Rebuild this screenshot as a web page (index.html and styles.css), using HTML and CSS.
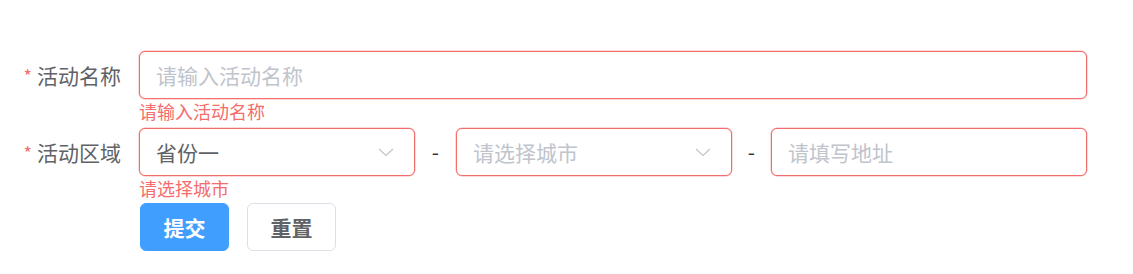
FILE: index.html
```html
<!DOCTYPE html>
<html lang="zh-CN">
<head>
<meta charset="utf-8">
<title>活动表单</title>
<link rel="stylesheet" href="styles.css">
</head>
<body>
<form class="form">
  <div class="form-item">
    <label class="label"><span class="req">*</span>活动名称</label>
    <div class="content">
      <div class="input is-error"><span class="placeholder">请输入活动名称</span></div>
      <div class="error error-first">请输入活动名称</div>
    </div>
  </div>
  <div class="form-item">
    <label class="label"><span class="req">*</span>活动区域</label>
    <div class="content">
      <div class="region">
        <div class="input is-error select"><span class="value">省份一</span>
          <svg class="arrow" width="16" height="9" viewBox="0 0 16 9"><path d="M1 1 L8 7.5 L15 1" fill="none" stroke="#C0C4CC" stroke-width="1.2"/></svg>
        </div>
        <div class="dash">-</div>
        <div class="input is-error select"><span class="placeholder">请选择城市</span>
          <svg class="arrow" width="16" height="9" viewBox="0 0 16 9"><path d="M1 1 L8 7.5 L15 1" fill="none" stroke="#C0C4CC" stroke-width="1.2"/></svg>
        </div>
        <div class="dash">-</div>
        <div class="input is-error"><span class="placeholder">请填写地址</span></div>
      </div>
      <div class="error error-last">请选择城市</div>
    </div>
  </div>
  <div class="form-item">
    <div class="label"></div>
    <div class="content buttons">
      <button type="button" class="btn btn-primary">提交</button>
      <button type="button" class="btn">重置</button>
    </div>
  </div>
</form>
</body>
</html>
```

FILE: styles.css
```css
* { box-sizing: border-box; }
html, body { margin: 0; padding: 0; background: #fff; }
body {
  font-family: "Noto Sans CJK SC", "Noto Sans", "Liberation Sans", sans-serif;
  color: #606266;
}
.form {
  padding-top: 51px;
  width: 1087px;
}
.form-item {
  display: flex;
  align-items: flex-start;
}
.label {
  width: 139px;
  flex: 0 0 139px;
  padding-right: 18px;
  text-align: right;
  font-size: 21px;
  line-height: 48px;
  height: 48px;
  color: #606266;
}
.req {
  color: #F56C6C;
  margin-right: 5px;
  font-size: 18px;
  vertical-align: 1px;
}
.content {
  flex: 1;
  min-width: 0;
}
.input {
  height: 48px;
  border: 1px solid #DCDFE6;
  border-radius: 6px;
  padding: 0 16px;
  display: flex;
  align-items: center;
  font-size: 21px;
  background: #fff;
}
.input.is-error {
  border-color: #F56C6C;
  box-shadow: 0 0 0 0.5px rgba(245,108,108,0.5);
}
.placeholder { color: #C0C4CC; }
.value { color: #606266; }
.select { justify-content: space-between; padding-right: 20px; }
.arrow { display: block; }
.error {
  height: 28px;
  padding-top: 3px;
  font-size: 18px;
  line-height: 18px;
  color: #F56C6C;
}
.error-first { height: 29px; }
.error-last { height: 27px; }
.region {
  display: grid;
  grid-template-columns: 276px 41px 276px 39px 1fr;
}
.dash {
  text-align: center;
  font-size: 21px;
  line-height: 46px;
  color: #303133;
}
.buttons {
  display: flex;
  gap: 18px;
  padding-left: 1px;
}
.btn {
  width: 89px;
  height: 48px;
  border-radius: 6px;
  border: 1px solid #DCDFE6;
  background: #fff;
  color: #606266;
  font-family: inherit;
  font-size: 21px;
  font-weight: 600;
  padding: 0;
  margin: 0;
  cursor: pointer;
}
.btn-primary {
  background: #409EFF;
  border-color: #409EFF;
  color: #fff;
}
```
